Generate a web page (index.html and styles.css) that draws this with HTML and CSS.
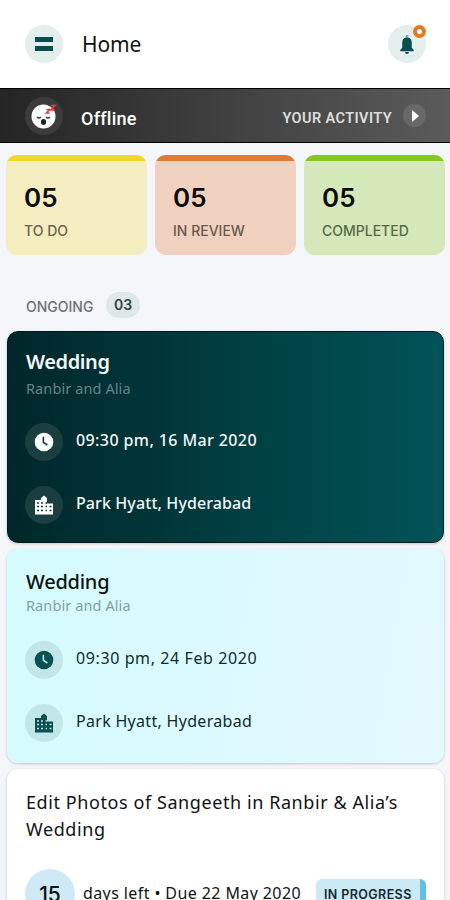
FILE: index.html
```html
<!DOCTYPE html>
<html lang="en">
<head>
<meta charset="utf-8">
<meta name="viewport" content="width=device-width, initial-scale=1">
<title>Home</title>
<link rel="stylesheet" href="styles.css">
</head>
<body>
<svg class="defs" width="0" height="0" aria-hidden="true">
  <symbol id="clock" viewBox="0 0 20 20"><circle cx="10" cy="10" r="9.3" fill="currentColor"/><path d="M9.4 4.8v5.600l4 2.600" fill="none" stroke="var(--cut)" stroke-width="1.600"/></symbol>
  <symbol id="city" viewBox="0 0 20 20"><path fill="currentColor" d="M1 5h6V3l3-2.500L13 3v5.500h6V19.500H1z"/><path stroke="var(--cut)" stroke-width="1.300" fill="none" d="M3 8h2M3 11.500h2M3 15.500h2M7 8h2M7 11.500h2M7 15.500h2M11.500 8h1.500M11.500 11.500h1.500M11.500 15.500h1.500M15.500 11.500h2M15.500 15.500h2"/></symbol>
</svg>
<header class="topbar">
  <button class="round menu" aria-label="Menu"><i></i><i></i></button>
  <h1 class="title">Home</h1>
  <button class="round bell" aria-label="Notifications">
    <svg width="14" height="19" viewBox="0 0 14 20"><path fill="#7fa19f" d="M5.500 3.200V1.500a1.500 1.500 0 0 1 3 0v1.700z"/><path fill="#074e50" d="M5.500 3h3C11 3.500 12 5.500 12 8v5.500l2 2V17H0v-1.500l2-2V8c0-2.500 1-4.500 3.500-5zM5 18h4a2 2 0 0 1-4 0z"/></svg>
    <span class="dot"></span>
  </button>
</header>
<section class="status">
  <span class="round face">
    <svg width="26" height="26" viewBox="0 0 26 26"><circle cx="12.500" cy="13.500" r="12" fill="#fff"/><path d="M6 14q2 2 4 0M15 14q2 2 4 0" fill="none" stroke="#333" stroke-width="1.200"/><ellipse cx="12.500" cy="19" rx="2.600" ry="2.900" fill="#202020"/><path d="M20 2.500h4l-4 4.500h4M15.500 6.500h3l-3 3.500h3" fill="none" stroke="#e63b3f" stroke-width="1.700"/></svg>
  </span>
  <span class="offline">Offline</span>
  <span class="activity">YOUR ACTIVITY</span>
  <span class="play"><svg width="7" height="12" viewBox="0 0 7 12"><path d="M0 0l7 6-7 6z" fill="#fff"/></svg></span>
</section>
<main>
  <section class="stats">
    <div class="stat todo"><strong>05</strong><span>TO DO</span></div>
    <div class="stat review"><strong>05</strong><span>IN REVIEW</span></div>
    <div class="stat done"><strong>05</strong><span>COMPLETED</span></div>
  </section>
  <div class="ongoing"><span class="label">ONGOING</span><span class="count">03</span></div>
  <article class="card dark">
    <h2>Wedding</h2>
    <p class="sub">Ranbir and Alia</p>
    <div class="row"><span class="round"><svg width="20" height="20"><use href="#clock"/></svg></span><span class="date">09:30 pm, 16 Mar 2020</span></div>
    <div class="row"><span class="round"><svg width="20" height="20"><use href="#city"/></svg></span><span class="place">Park Hyatt, Hyderabad</span></div>
  </article>
  <article class="card light">
    <h2>Wedding</h2>
    <p class="sub">Ranbir and Alia</p>
    <div class="row"><span class="round"><svg width="20" height="20"><use href="#clock"/></svg></span><span class="date">09:30 pm, 24 Feb 2020</span></div>
    <div class="row"><span class="round"><svg width="20" height="20"><use href="#city"/></svg></span><span class="place">Park Hyatt, Hyderabad</span></div>
  </article>
  <article class="card task">
    <h3>Edit Photos of Sangeeth in Ranbir &amp; Alia’s Wedding</h3>
    <div class="meta"><span class="days">15</span><span class="due">days left • Due 22 May 2020</span><span class="badge">IN PROGRESS</span></div>
  </article>
</main>
</body>
</html>
```
FILE: styles.css
```css
* { box-sizing: border-box; }
html, body { margin: 0; height: 900px; overflow: hidden; }
body { background: #f4f6f9; color: #101314; font-family: "Noto Sans", sans-serif; white-space: nowrap; }
h1, h2, h3, p { margin: 0; font-weight: 400; }
button { border: 0; padding: 0; }
.defs { display: block; height: 0; }
.round { width: 38px; height: 38px; border-radius: 50%; display: flex; align-items: center; justify-content: center; flex: none; }
.topbar { height: 88px; background: #fff; display: flex; align-items: center; padding: 0 24px 0 25px; }
.topbar .round { background: #e4eeed; }
.menu { flex-direction: column; gap: 4px; }
.menu i { width: 18px; height: 5px; background: #074e50; }
.title { font-size: 21px; line-height: 28px; margin-left: 19px; letter-spacing: -0.1px; }
.bell { position: relative; margin-left: auto; }
.dot { position: absolute; right: 0; top: 0; width: 13px; height: 13px; border: 4px solid #e47a20; border-radius: 50%; background: #fff; }
.status { height: 55px; background: linear-gradient(90deg, #252525, #5b5b5b); border: solid #000; border-width: 1px 0; display: flex; align-items: center; padding: 0 24px 0 25px; color: #fff; font-family: Roboto, sans-serif; }
.face { background: #3c3c3c; }
.offline { font-size: 18px; font-weight: 500; margin: 5px 0 0 18px; letter-spacing: .25px; }
.activity { font-size: 14.5px; font-weight: 600; color: #dedede; margin: 6px 11px 0 auto; letter-spacing: .4px; }
.play { width: 23px; height: 23px; border-radius: 50%; background: #686868; display: flex; align-items: center; justify-content: center; padding-left: 2px; }
.stats { display: grid; grid-template-columns: repeat(3, 1fr); gap: 8px; padding: 12px 5px 0 6px; }
.stat { height: 100px; border-radius: 11px; padding: 27px 0 0 18px; display: flex; flex-direction: column; }
.stat strong { font: 600 26px/32px Inter, sans-serif; color: #0a0b0a; }
.stat span { font: 500 14px/20px Inter, sans-serif; margin-top: 7px; }
.todo { background: linear-gradient(#f1d72c 6px, #f4edbf 6px); color: #6a6650; }
.review { background: linear-gradient(#df7934 6px, #f0d1bf 6px); color: #6b584e; }
.done { background: linear-gradient(#83c922 6px, #d4e8b9 6px); color: #586b48; }
.ongoing { display: flex; align-items: center; height: 26px; margin: 37px 0 13px 26px; }
.label { font: 500 14px/20px Inter, sans-serif; color: #6e7173; width: 80px; margin-top: 4px; }
.count { background: #dfe8e8; width: 34px; height: 26px; border-radius: 13px; font: 600 14px/26px Inter, sans-serif; color: #354243; text-align: center; }
.card { margin: 0 6px 0 7px; border-radius: 11px; padding: 0 18px; box-shadow: 0 1px 3px #0003; }
.dark { height: 212px; background: linear-gradient(90deg, #00272a, #005357); color: #f3f6f6; border: 1px solid #001b1d; padding: 16px 17px 0; --cut: #12383a; }
.light { height: 214px; margin-top: 6px; background: linear-gradient(100deg, #d4fbfd, #e4f9ff); padding-top: 19px; --cut: #c2e6e8; }
.card h2 { font-size: 20px; line-height: 28px; font-weight: 500; letter-spacing: -.25px; padding-left: 1px; }
.dark h2 { font-weight: 600; letter-spacing: -.4px; }
.sub { font-size: 14.5px; line-height: 20px; color: #80a1a5; letter-spacing: .1px; padding-left: 1px; margin-top: -1px; }
.dark .sub { color: #668486; margin-top: 2px; }
.row { display: flex; align-items: center; height: 38px; gap: 13px; margin-top: 25px; font-size: 16px; }
.light .row { color: #102a2c; }
.row > span:last-child { margin-top: -4px; }
.row .round svg { display: block; }
.sub + .row { margin-top: 25px; }
.light .sub + .row { margin-top: 26px; }
.dark .row { font-weight: 500; }
.dark .date { letter-spacing: .4px; }
.light .date { letter-spacing: .6px; }
.dark .place { letter-spacing: .1px; }
.light .place { letter-spacing: .3px; }
.dark .round { background: #1b3e40; color: #fff; }
.light .round { background: #c2e6e8; color: #075153; }
.task { height: 180px; margin-top: 6px; padding-top: 20px; background: #fff; }
.task h3 { font-size: 18px; line-height: 27px; white-space: normal; letter-spacing: .58px; padding-left: 1px; }
.meta { display: flex; align-items: center; margin-top: 26px; }
.days { width: 50px; height: 50px; border-radius: 50%; background: #cfeaf6; display: flex; align-items: center; justify-content: center; font: 500 21px Inter, sans-serif; }
.due { margin: -2px 0 0 8px; font-size: 16px; letter-spacing: .4px; }
.badge { margin-left: auto; width: 110px; height: 30px; border-radius: 6px; background: linear-gradient(90deg, #cbeaf6 104px, #62bde2 104px); padding-left: 8px; font: 600 12.5px/31px Inter, sans-serif; letter-spacing: .4px; color: #17282e; }
```
